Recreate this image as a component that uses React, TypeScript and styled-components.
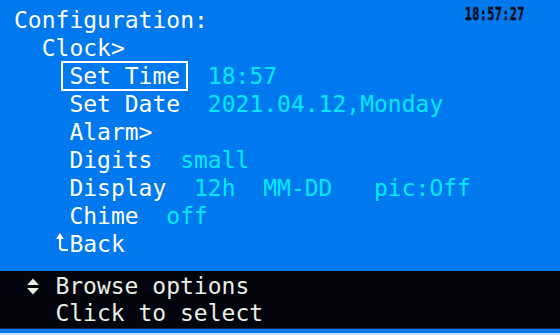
import React from 'react';
import styled, { createGlobalStyle } from 'styled-components';

const GlobalStyle = createGlobalStyle`
  html, body {
    margin: 0;
    padding: 0;
    background: #0078ee;
  }
  body {
    font-family: "DejaVu Sans Mono", "Liberation Mono", monospace;
  }
`;

const Screen = styled.div`
  width: 560px;
  height: 335px;
  display: flex;
  flex-direction: column;
  background: #0078ee;
  font-family: "DejaVu Sans Mono", "Liberation Mono", monospace;
  font-size: 23px;
  overflow: hidden;
`;

const Menu = styled.div`
  flex: 1;
  padding: 6px 0 0 14px;
  display: flex;
  flex-direction: column;
`;

const Header = styled.div`
  display: flex;
  justify-content: space-between;
  align-items: flex-start;
`;

const Title = styled.div`
  color: #ffffff;
  line-height: 28px;
  white-space: pre;
`;

const Clock = styled.div`
  font-family: "DejaVu Sans Mono", "Liberation Mono", monospace;
  font-size: 18px;
  line-height: 18px;
  font-weight: 700;
  color: #000814;
  margin: -1px 35px 0 0;
  transform: scaleX(0.66);
  transform-origin: right center;
  letter-spacing: 0.5px;
  -webkit-text-stroke: 0.4px #000814;
`;

const Row = styled.div<{ $indent: number }>`
  display: flex;
  align-items: center;
  height: 28px;
  line-height: 28px;
  padding-left: ${(p) => p.$indent}ch;
  color: #ffffff;
  white-space: pre;
`;

const Label = styled.span<{ $selected?: boolean }>`
  display: inline-block;
  line-height: 26px;
  ${(p) =>
    p.$selected &&
    `
    padding: 0 6px;
    margin: 0 -6px;
    outline: 2px solid #ffffff;
  `}
`;

const Value = styled.span<{ $gap: number }>`
  color: #00eaff;
  margin-left: ${(p) => p.$gap}ch;
`;

const BackIcon = styled.svg`
  width: 1ch;
  height: 20px;
  flex: none;
  margin-top: -4px;
`;

const Footer = styled.div`
  height: 58px;
  box-sizing: border-box;
  padding-top: 2px;
  background: #04040f;
  border-bottom: 1px solid #0c2850;
  color: #e8f0e2;
`;

const FooterLine = styled.div`
  display: flex;
  align-items: center;
  height: 27px;
  line-height: 27px;
  white-space: pre;
`;

const IconSlot = styled.span`
  display: inline-flex;
  align-items: center;
  width: 4ch;
  padding-left: 27px;
  box-sizing: border-box;
`;

const Strip = styled.div`
  height: 4px;
  background: #0078ee;
  border-bottom: 2px solid #c8e0f8;
`;

type Item = {
  indent: number;
  label: React.ReactNode;
  selected?: boolean;
  values?: { text: string; gap: number }[];
};

const items: Item[] = [
  { indent: 2, label: 'Clock>' },
  { indent: 4, label: 'Set Time', selected: true, values: [{ text: '18:57', gap: 2 }] },
  { indent: 4, label: 'Set Date', values: [{ text: '2021.04.12,Monday', gap: 2 }] },
  { indent: 4, label: 'Alarm>' },
  { indent: 4, label: 'Digits', values: [{ text: 'small', gap: 2 }] },
  {
    indent: 4,
    label: 'Display',
    values: [
      { text: '12h', gap: 2 },
      { text: 'MM-DD', gap: 2 },
      { text: 'pic:Off', gap: 3 },
    ],
  },
  { indent: 4, label: 'Chime', values: [{ text: 'off', gap: 2 }] },
];

const UpDown = () => (
  <svg width="12" height="17" viewBox="0 0 12 17">
    <path d="M6 0.5 L11.5 6.4 Q11.8 7 11 7 L1 7 Q0.2 7 0.5 6.4 Z" fill="#e8f0e2" />
    <path d="M6 16.5 L11.5 10.6 Q11.8 10 11 10 L1 10 Q0.2 10 0.5 10.6 Z" fill="#e8f0e2" />
  </svg>
);

export default function App() {
  return (
    <Screen>
      <GlobalStyle />
      <Menu>
        <Header>
          <Title>Configuration:</Title>
          <Clock>18:57:27</Clock>
        </Header>
        {items.map((it, i) => (
          <Row key={i} $indent={it.indent}>
            <Label $selected={it.selected}>{it.label}</Label>
            {it.values?.map((v, j) => (
              <Value key={j} $gap={v.gap}>
                {v.text}
              </Value>
            ))}
          </Row>
        ))}
        <Row $indent={3}>
          <BackIcon viewBox="0 0 14 20">
            <path d="M4 1 L8 7 L5.2 7 L5.2 15 Q5.2 17 7.5 17 L12 17 L12 19 L7 19 Q3 19 3 15 L3 7 L0 7 Z" fill="#ffffff" />
          </BackIcon>
          <Label>Back</Label>
        </Row>
      </Menu>
      <Footer>
        <FooterLine>
          <IconSlot>
            <UpDown />
          </IconSlot>
          Browse options
        </FooterLine>
        <FooterLine>
          <IconSlot />
          Click to select
        </FooterLine>
      </Footer>
      <Strip />
    </Screen>
  );
}
